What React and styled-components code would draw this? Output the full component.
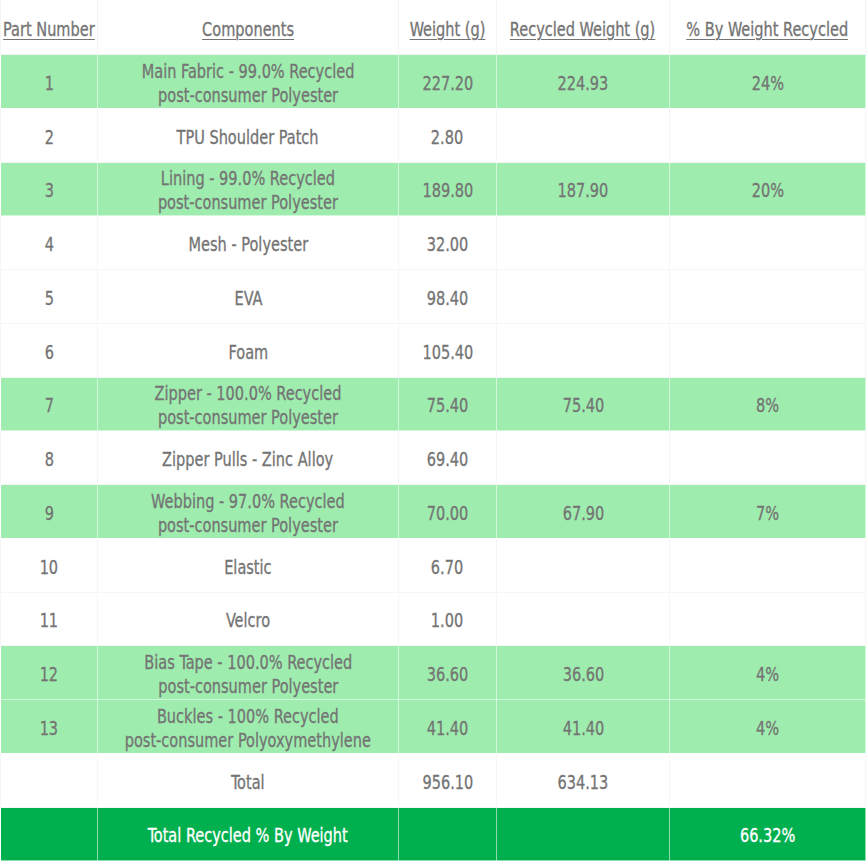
import styled, { createGlobalStyle } from 'styled-components';

const GlobalStyle = createGlobalStyle`
  html, body {
    margin: 0;
    padding: 0;
    background: #ffffff;
  }
  body {
    font-family: 'DejaVu Sans Condensed', 'Liberation Sans Narrow', 'Roboto', sans-serif;
  }
`;

const Table = styled.table`
  width: 865px;
  border-collapse: collapse;
  table-layout: fixed;
  color: #747474;
  font-size: 19px;
`;

// narrow the face so it reads like the condensed display font of the original
const Text = styled.span`
  display: inline-block;
  margin: 0 -30px;
  white-space: nowrap;
  transform: scaleX(0.85);
  transform-origin: center;
  line-height: 24px;
  -webkit-text-stroke: 0.3px currentColor;
  text-decoration: ${(p) => (p.$underline ? 'underline' : 'none')};
  text-underline-offset: 3px;
  text-decoration-thickness: 1px;
`;

const HeadCell = styled.th`
  height: 51px;
  padding: 3px 0 0;
  font-weight: normal;
  border: 1px solid #f4f4f4;
  border-top: none;
`;

const Row = styled.tr`
  background: ${(p) =>
    p.$tone === 'light' ? '#9eedae' : p.$tone === 'dark' ? '#00b04e' : '#ffffff'};
  color: ${(p) => (p.$tone === 'dark' ? '#ffffff' : '#747474')};
`;

const Cell = styled.td`
  height: 49.75px;
  padding: 3px 0 0;
  text-align: center;
  border: 1px solid
    ${(p) => (p.$tone === 'plain' ? '#f6f6f6' : 'rgba(255, 255, 255, 0.55)')};
`;

const rows = [
  ['1', ['Main Fabric - 99.0% Recycled', 'post-consumer Polyester'], '227.20', '224.93', '24%'],
  ['2', ['TPU Shoulder Patch'], '2.80', '', ''],
  ['3', ['Lining - 99.0% Recycled', 'post-consumer Polyester'], '189.80', '187.90', '20%'],
  ['4', ['Mesh - Polyester'], '32.00', '', ''],
  ['5', ['EVA'], '98.40', '', ''],
  ['6', ['Foam'], '105.40', '', ''],
  ['7', ['Zipper - 100.0% Recycled', 'post-consumer Polyester'], '75.40', '75.40', '8%'],
  ['8', ['Zipper Pulls - Zinc Alloy'], '69.40', '', ''],
  ['9', ['Webbing - 97.0% Recycled', 'post-consumer Polyester'], '70.00', '67.90', '7%'],
  ['10', ['Elastic'], '6.70', '', ''],
  ['11', ['Velcro'], '1.00', '', ''],
  ['12', ['Bias Tape - 100.0% Recycled', 'post-consumer Polyester'], '36.60', '36.60', '4%'],
  ['13', ['Buckles - 100% Recycled', 'post-consumer Polyoxymethylene'], '41.40', '41.40', '4%'],
];

const headers = ['Part Number', 'Components', 'Weight (g)', 'Recycled Weight (g)', '% By Weight Recycled'];

export default function App() {
  return (
    <>
      <GlobalStyle />
      <Table>
        <colgroup>
          <col style={{ width: 97 }} />
          <col style={{ width: 301 }} />
          <col style={{ width: 98 }} />
          <col style={{ width: 173 }} />
          <col style={{ width: 196 }} />
        </colgroup>
        <thead>
          <tr>
            {headers.map((h) => (
              <HeadCell key={h}>
                <Text $underline>{h}</Text>
              </HeadCell>
            ))}
          </tr>
        </thead>
        <tbody>
          {rows.map(([num, comp, w, rw, pct]) => {
            const tone = rw ? 'light' : 'plain';
            return (
              <Row key={num} $tone={tone}>
                <Cell $tone={tone}><Text>{num}</Text></Cell>
                <Cell $tone={tone}>
                  <Text>
                    {comp.map((line, i) => (
                      <div key={i}>{line}</div>
                    ))}
                  </Text>
                </Cell>
                <Cell $tone={tone}><Text>{w}</Text></Cell>
                <Cell $tone={tone}><Text>{rw}</Text></Cell>
                <Cell $tone={tone}><Text>{pct}</Text></Cell>
              </Row>
            );
          })}
          <Row $tone="plain">
            <Cell $tone="plain" />
            <Cell $tone="plain"><Text>Total</Text></Cell>
            <Cell $tone="plain"><Text>956.10</Text></Cell>
            <Cell $tone="plain"><Text>634.13</Text></Cell>
            <Cell $tone="plain" />
          </Row>
          <Row $tone="dark">
            <Cell $tone="dark" />
            <Cell $tone="dark"><Text>Total Recycled % By Weight</Text></Cell>
            <Cell $tone="dark" />
            <Cell $tone="dark" />
            <Cell $tone="dark"><Text>66.32%</Text></Cell>
          </Row>
        </tbody>
      </Table>
    </>
  );
}
